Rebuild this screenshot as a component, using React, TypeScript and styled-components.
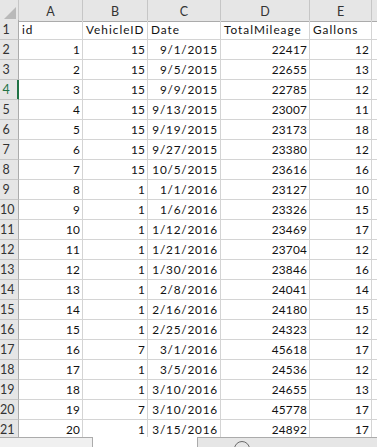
import styled, { createGlobalStyle } from "styled-components";

const GlobalStyle = createGlobalStyle`
  html, body {
    margin: 0;
    padding: 0;
    background: #ffffff;
  }
  body {
    font-family: Lato, "Liberation Sans", sans-serif;
  }
`;

const rows: [number, number, string, number, number][] = [
  [1, 15, "9/1/2015", 22417, 12],
  [2, 15, "9/5/2015", 22655, 13],
  [3, 15, "9/9/2015", 22785, 12],
  [4, 15, "9/13/2015", 23007, 11],
  [5, 15, "9/19/2015", 23173, 18],
  [6, 15, "9/27/2015", 23380, 12],
  [7, 15, "10/5/2015", 23616, 16],
  [8, 1, "1/1/2016", 23127, 10],
  [9, 1, "1/6/2016", 23326, 15],
  [10, 1, "1/12/2016", 23469, 17],
  [11, 1, "1/21/2016", 23704, 12],
  [12, 1, "1/30/2016", 23846, 16],
  [13, 1, "2/8/2016", 24041, 14],
  [14, 1, "2/16/2016", 24180, 15],
  [15, 1, "2/25/2016", 24323, 12],
  [16, 7, "3/1/2016", 45618, 17],
  [17, 1, "3/5/2016", 24536, 12],
  [18, 1, "3/10/2016", 24655, 13],
  [19, 7, "3/10/2016", 45778, 17],
  [20, 1, "3/15/2016", 24892, 17],
  [21, 1, "3/21/2016", 25040, 14],
];

const activeRow = 4;

const Window = styled.div`
  width: 377px;
  height: 447px;
  overflow: hidden;
  display: flex;
  flex-direction: column;
`;

const SheetArea = styled.div`
  height: 437px;
  flex: none;
  overflow: hidden;
`;

const Grid = styled.div`
  display: grid;
  grid-template-columns: 19px 64px 65px 73px 89px 62px 1fr;
  grid-auto-rows: 20px;
  font-size: 11.8px;
  color: #111;
`;

const Corner = styled.div`
  height: 22px;
  box-sizing: border-box;
  background: #e6e6e6;
  border-right: 1px solid #c6c6c6;
  border-bottom: 1px solid #ababab;
  display: flex;
  align-items: flex-end;
  justify-content: flex-end;
  padding: 0 2px 2px 0;
`;

const Triangle = styled.div`
  width: 0;
  height: 0;
  border-left: 12px solid transparent;
  border-bottom: 12px solid #b9b9b9;
`;

const ColHead = styled.div<{ $last?: boolean }>`
  height: 22px;
  box-sizing: border-box;
  background: #e6e6e6;
  border-right: ${({ $last }) => ($last ? "none" : "1px solid #c6c6c6")};
  border-bottom: 1px solid #ababab;
  color: #333;
  font-size: 12.5px;
  text-align: center;
  line-height: 24px;
`;

const RowHead = styled.div<{ $active?: boolean }>`
  box-sizing: border-box;
  background: #e6e6e6;
  border-right: 1px solid ${({ $active }) => ($active ? "#217346" : "#ababab")};
  box-shadow: ${({ $active }) => ($active ? "inset -1px 0 0 #217346" : "none")};
  border-bottom: 1px solid #c6c6c6;
  color: ${({ $active }) => ($active ? "#217346" : "#333")};
  font-size: 12.5px;
  line-height: 20px;
  text-align: center;
  padding-right: 6px;
  white-space: nowrap;
`;

type Kind = "label" | "date" | "num";

const spacing: Record<Kind, string> = {
  label: "1px",
  date: "0.8px",
  num: "0.2px",
};

const Cell = styled.div<{ $kind?: Kind; $tail?: boolean }>`
  box-sizing: border-box;
  border-right: ${({ $tail }) => ($tail ? "none" : "1px solid #d4d4d4")};
  border-bottom: 1px solid #d4d4d4;
  line-height: 20px;
  letter-spacing: ${({ $kind = "num" }) => spacing[$kind]};
  text-align: ${({ $kind = "num" }) => ($kind === "label" ? "left" : "right")};
  padding: ${({ $kind = "num" }) =>
    $kind === "label" ? "0 0 0 3px" : "0 2px 0 0"};
  white-space: nowrap;
`;

const TabBar = styled.div`
  height: 30px;
  flex: none;
  display: flex;
  background: #e6e6e6;
`;

const NavBox = styled.div`
  width: 93px;
  box-sizing: border-box;
  background: #f0f0f0;
  border-top: 1px solid #ababab;
  border-right: 1px solid #ababab;
`;

const ActiveTab = styled.div`
  width: 104px;
  background: #ffffff;
  color: #217346;
  font-weight: 700;
  font-size: 13px;
  text-align: center;
  padding-top: 8px;
  box-sizing: border-box;
`;

const RestBar = styled.div`
  flex: 1;
  box-sizing: border-box;
  border-top: 1px solid #ababab;
  border-left: 1px solid #ababab;
  padding: 3px 0 0 36px;
`;

const AddSheet = styled.div`
  width: 14px;
  height: 14px;
  border-radius: 50%;
  border: 1px solid #6a6a6a;
`;

const headers = ["A", "B", "C", "D", "E"];

function RowFragment({ n, cells }: { n: number; cells: (string | number)[] }) {
  return (
    <>
      <RowHead $active={n === activeRow}>{n}</RowHead>
      {cells.map((c, i) => (
        <Cell key={i} $kind={i === 2 ? "date" : "num"}>
          {c}
        </Cell>
      ))}
      <Cell $tail />
    </>
  );
}

function App() {
  return (
    <>
      <GlobalStyle />
      <Window>
        <SheetArea>
          <Grid>
            <Corner>
              <Triangle />
            </Corner>
            {headers.map((h) => (
              <ColHead key={h}>{h}</ColHead>
            ))}
            <ColHead $last />

            <RowHead>1</RowHead>
            <Cell $kind="label">id</Cell>
            <Cell $kind="label">VehicleID</Cell>
            <Cell $kind="label">Date</Cell>
            <Cell $kind="label">TotalMileage</Cell>
            <Cell $kind="label">Gallons</Cell>
            <Cell $tail />

            {rows.map(([id, vehicle, date, miles, gallons]) => (
              <RowFragment
                key={id}
                n={id + 1}
                cells={[id, vehicle, date, miles, gallons]}
              />
            ))}
          </Grid>
        </SheetArea>
        <TabBar>
          <NavBox />
          <ActiveTab>fuel data</ActiveTab>
          <RestBar>
            <AddSheet />
          </RestBar>
        </TabBar>
      </Window>
    </>
  );
}

export default App;
